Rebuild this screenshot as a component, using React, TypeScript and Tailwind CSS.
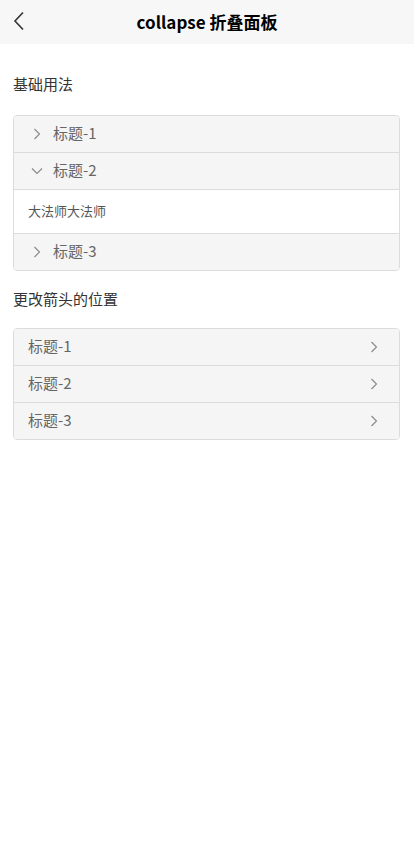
import React, { useState } from 'react';

const font = { fontFamily: '"Noto Sans CJK SC", "Noto Sans", sans-serif' };

function Chevron({ dir = 'right' }: { dir?: 'right' | 'down' }) {
  if (dir === 'down') {
    return (
      <svg width="12" height="8" viewBox="0 0 12 8" className="shrink-0">
        <path d="M1 1.5 L6 6.5 L11 1.5" fill="none" stroke="#888" strokeWidth="1.1" />
      </svg>
    );
  }
  return (
    <svg width="8" height="12" viewBox="0 0 8 12" className="shrink-0">
      <path d="M1.5 1 L6.5 6 L1.5 11" fill="none" stroke="#888" strokeWidth="1.1" />
    </svg>
  );
}

interface Panel {
  id: string;
  title: string;
  content: string;
}

const panels: Panel[] = [
  { id: '1', title: '标题-1', content: '大法师大法师' },
  { id: '2', title: '标题-2', content: '大法师大法师' },
  { id: '3', title: '标题-3', content: '大法师大法师' },
];

function Collapse({ arrowRight = false, defaultOpen = [] }: { arrowRight?: boolean; defaultOpen?: string[] }) {
  const [open, setOpen] = useState<string[]>(defaultOpen);

  const toggle = (id: string) => {
    setOpen(prev => (prev.includes(id) ? prev.filter(x => x !== id) : [...prev, id]));
  };

  return (
    <div className="rounded-[4px] border border-[#dcdcdc] overflow-hidden">
      {panels.map((p, i) => {
        const isOpen = open.includes(p.id);
        const last = i === panels.length - 1;
        return (
          <div key={p.id} className={last ? '' : 'border-b border-[#dcdcdc]'}>
            <div
              onClick={() => toggle(p.id)}
              className={`h-[36px] bg-[#f5f5f5] flex items-center cursor-pointer ${arrowRight ? 'pl-[14px] pr-[21px] justify-between' : 'pl-[17px]'}`}
            >
              {!arrowRight && (
                <span className="w-[12px] flex justify-center mr-[10px]">
                  <Chevron dir={isOpen ? 'down' : 'right'} />
                </span>
              )}
              <span className="text-[15px] text-[#666] pb-[2px]">{p.title}</span>
              {arrowRight && <Chevron dir={isOpen ? 'down' : 'right'} />}
            </div>
            {isOpen && (
              <div className="h-[44px] bg-white border-t border-[#dcdcdc] flex items-center pl-[14px] pb-[1px] text-[13px] text-[#555]">
                {p.content}
              </div>
            )}
          </div>
        );
      })}
    </div>
  );
}

export default function App() {
  return (
    <div className="w-[414px] min-h-[856px] bg-white" style={font}>
      <div className="h-[44px] bg-[#f7f7f7] relative flex items-center justify-center">
        <svg width="12" height="20" viewBox="0 0 12 20" className="absolute left-[13px] top-[11px]">
          <path d="M10 1.5 L2 10 L10 18.5" fill="none" stroke="#333" strokeWidth="1.6" />
        </svg>
        <h1 className="text-[17px] font-bold text-black">collapse 折叠面板</h1>
      </div>

      <div className="pl-[13px] pr-[14px]">
        <div className="pt-[30px] h-[50px] leading-[20px] text-[15px] text-[#333]">基础用法</div>
        <div className="mt-[21px]">
          <Collapse defaultOpen={['2']} />
        </div>

        <div className="mt-[18px] h-[20px] leading-[20px] text-[15px] text-[#333]">更改箭头的位置</div>
        <div className="mt-[19px]">
          <Collapse arrowRight />
        </div>
      </div>
    </div>
  );
}
